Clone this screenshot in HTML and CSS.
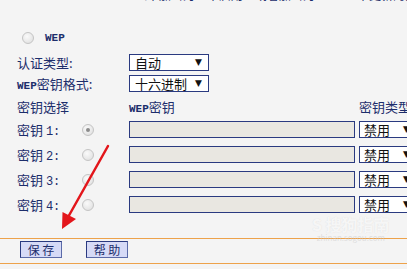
FILE: index.html
```html
<html>

<head>
	<meta charset="utf-8">
	<link rel="stylesheet" href="styles.css">
</head>

<body>
	<div id="div_main">
		<!-- top hint line, cut off by the window -->
		<div class="note">（不加密为：不启用　或者加密为：　　　不更新的共享密钥）</div>

		<div class="wep_row">
			<span class="radio"></span>
			<span class="mono">WEP</span>
		</div>

		<div class="form_row first">
			<div class="label">认证类型:</div>
			<div class="select short"><span>自动</span><span class="arrow">▼</span></div>
		</div>
		<div class="form_row">
			<div class="label"><span class="mono">WEP</span>密钥格式:</div>
			<div class="select short"><span>十六进制</span><span class="arrow">▼</span></div>
		</div>

		<div class="key_head">
			<div class="col_label">密钥选择</div>
			<div class="col_key"><span class="mono">WEP</span>密钥</div>
			<div class="col_type">密钥类型</div>
		</div>

		<div class="keys">
			<div class="key_row">
				<div class="label">密钥 <span class="mono num">1:</span></div>
				<div class="cell"><span class="radio checked"></span></div>
				<div class="txt"></div>
				<div class="select long"><span>禁用</span><span class="arrow">▼</span></div>
			</div>
			<div class="key_row">
				<div class="label">密钥 <span class="mono num">2:</span></div>
				<div class="cell"><span class="radio"></span></div>
				<div class="txt"></div>
				<div class="select long"><span>禁用</span><span class="arrow">▼</span></div>
			</div>
			<div class="key_row">
				<div class="label">密钥 <span class="mono num">3:</span></div>
				<div class="cell"><span class="radio"></span></div>
				<div class="txt"></div>
				<div class="select long"><span>禁用</span><span class="arrow">▼</span></div>
			</div>
			<div class="key_row">
				<div class="label">密钥 <span class="mono num">4:</span></div>
				<div class="cell"><span class="radio"></span></div>
				<div class="txt"></div>
				<div class="select long"><span>禁用</span><span class="arrow">▼</span></div>
			</div>
		</div>

		<div class="btn_bar">
			<div class="btn">保 存</div>
			<div class="btn">帮 助</div>
		</div>
	</div>

	<!-- watermark over the page -->
	<div class="watermark">
		<div class="wm_big">S 搜狗指南</div>
		<div class="wm_small">zhinan.sogou.com</div>
	</div>

	<!-- red arrow drawn over the form -->
	<svg class="arrow_overlay" width="407" height="269" viewBox="0 0 407 269">
		<line x1="108" y1="146" x2="67" y2="219" stroke="#e3161b" stroke-width="2.5" stroke-linecap="round" />
		<polygon points="62,229 62.5,212 76,219" fill="#e3161b" />
	</svg>
</body>

</html>
```

FILE: styles.css
```css
body {
	margin: 0;
	background-color: #f4f4f4;
	overflow: hidden;
	font-family: "Noto Sans CJK SC", "Noto Sans", sans-serif;
	font-size: 13px;
	color: #1c2d6b;
}

#div_main {
	width: 407px;
	overflow: hidden;
}

.mono {
	font-family: "Liberation Mono", monospace;
	font-size: 11px;
	font-weight: bold;
}

.mono.num {
	font-weight: normal;
	font-size: 12px;
}

.note {
	margin-top: -11px;
	height: 14px;
	line-height: 12px;
	padding-left: 135px;
	font-size: 12px;
	white-space: nowrap;
	overflow: hidden;
}

.wep_row {
	margin-top: 29px;
	height: 12px;
	padding-left: 22px;
	display: flex;
	align-items: center;
	gap: 11px;
}

/* grey round radio buttons */
.radio {
	display: inline-block;
	box-sizing: border-box;
	width: 12px;
	height: 12px;
	border-radius: 50%;
	border: 1px solid #c4c4c4;
	background: radial-gradient(circle at 40% 35%, #fafafa, #dcdcdc);
	position: relative;
	flex-shrink: 0;
}

.radio.checked::after {
	content: "";
	position: absolute;
	left: 3px;
	top: 3px;
	width: 4px;
	height: 4px;
	border-radius: 50%;
	background-color: #8c8c8c;
}

.form_row {
	display: flex;
	align-items: center;
	height: 17px;
	margin-top: 4px;
	padding-left: 17px;
}

.form_row.first {
	margin-top: 10px;
}

.form_row .label {
	width: 112px;
	flex-shrink: 0;
	white-space: nowrap;
}

.select {
	box-sizing: border-box;
	height: 17px;
	border: 1px solid #2a3a80;
	background-color: #fff;
	color: #111;
	display: flex;
	align-items: center;
	justify-content: space-between;
	padding: 0 6px 0 5px;
	line-height: 15px;
	white-space: nowrap;
	flex-shrink: 0;
}

.select .arrow {
	font-size: 9px;
	font-family: "DejaVu Sans", sans-serif;
}

.select.short {
	width: 80px;
}

.select.long {
	width: 54px;
	padding-left: 4px;
	padding-right: 2px;
}

.key_head {
	margin-top: 8px;
	height: 14px;
	line-height: 14px;
	padding-left: 17px;
	display: flex;
	white-space: nowrap;
}

.col_label {
	width: 112px;
	flex-shrink: 0;
}

.col_key {
	width: 230px;
	flex-shrink: 0;
}

.col_type {
	flex-shrink: 0;
}

.keys {
	margin-top: 7px;
	padding-left: 17px;
	display: flex;
	flex-direction: column;
	gap: 8px;
}

.key_row {
	display: flex;
	align-items: center;
	height: 17px;
}

.key_row .label {
	width: 65px;
	flex-shrink: 0;
	white-space: nowrap;
}

.key_row .cell {
	width: 47px;
	flex-shrink: 0;
	display: flex;
	align-items: center;
}

.txt {
	box-sizing: border-box;
	width: 226px;
	height: 17px;
	flex-shrink: 0;
	border: 1px solid #2a3a80;
	background-color: #e9e7e1;
	margin-right: 4px;
}

.btn_bar {
	margin-top: 25px;
	border-top: 1px solid #eda24a;
	border-bottom: 1px solid #eda24a;
	padding: 2px 0 5px 20px;
	display: flex;
	gap: 24px;
}

.btn {
	box-sizing: border-box;
	width: 42px;
	height: 17px;
	line-height: 15px;
	text-align: center;
	border: 1px solid #2a3a80;
	border-right-color: #5a6aa8;
	border-bottom-color: #5a6aa8;
	background-color: #d6daf6;
	font-size: 12px;
}

.watermark {
	position: absolute;
	left: 312px;
	top: 215px;
	color: rgba(255, 255, 255, 0.75);
	text-align: center;
}

.wm_big {
	font-size: 16px;
	font-weight: bold;
	line-height: 18px;
	text-shadow: 0 0 1px rgba(180, 180, 180, 0.4);
}

.wm_small {
	font-size: 8px;
	line-height: 10px;
	color: rgba(200, 200, 200, 0.5);
}

.arrow_overlay {
	position: absolute;
	left: 0;
	top: 0;
}
```
